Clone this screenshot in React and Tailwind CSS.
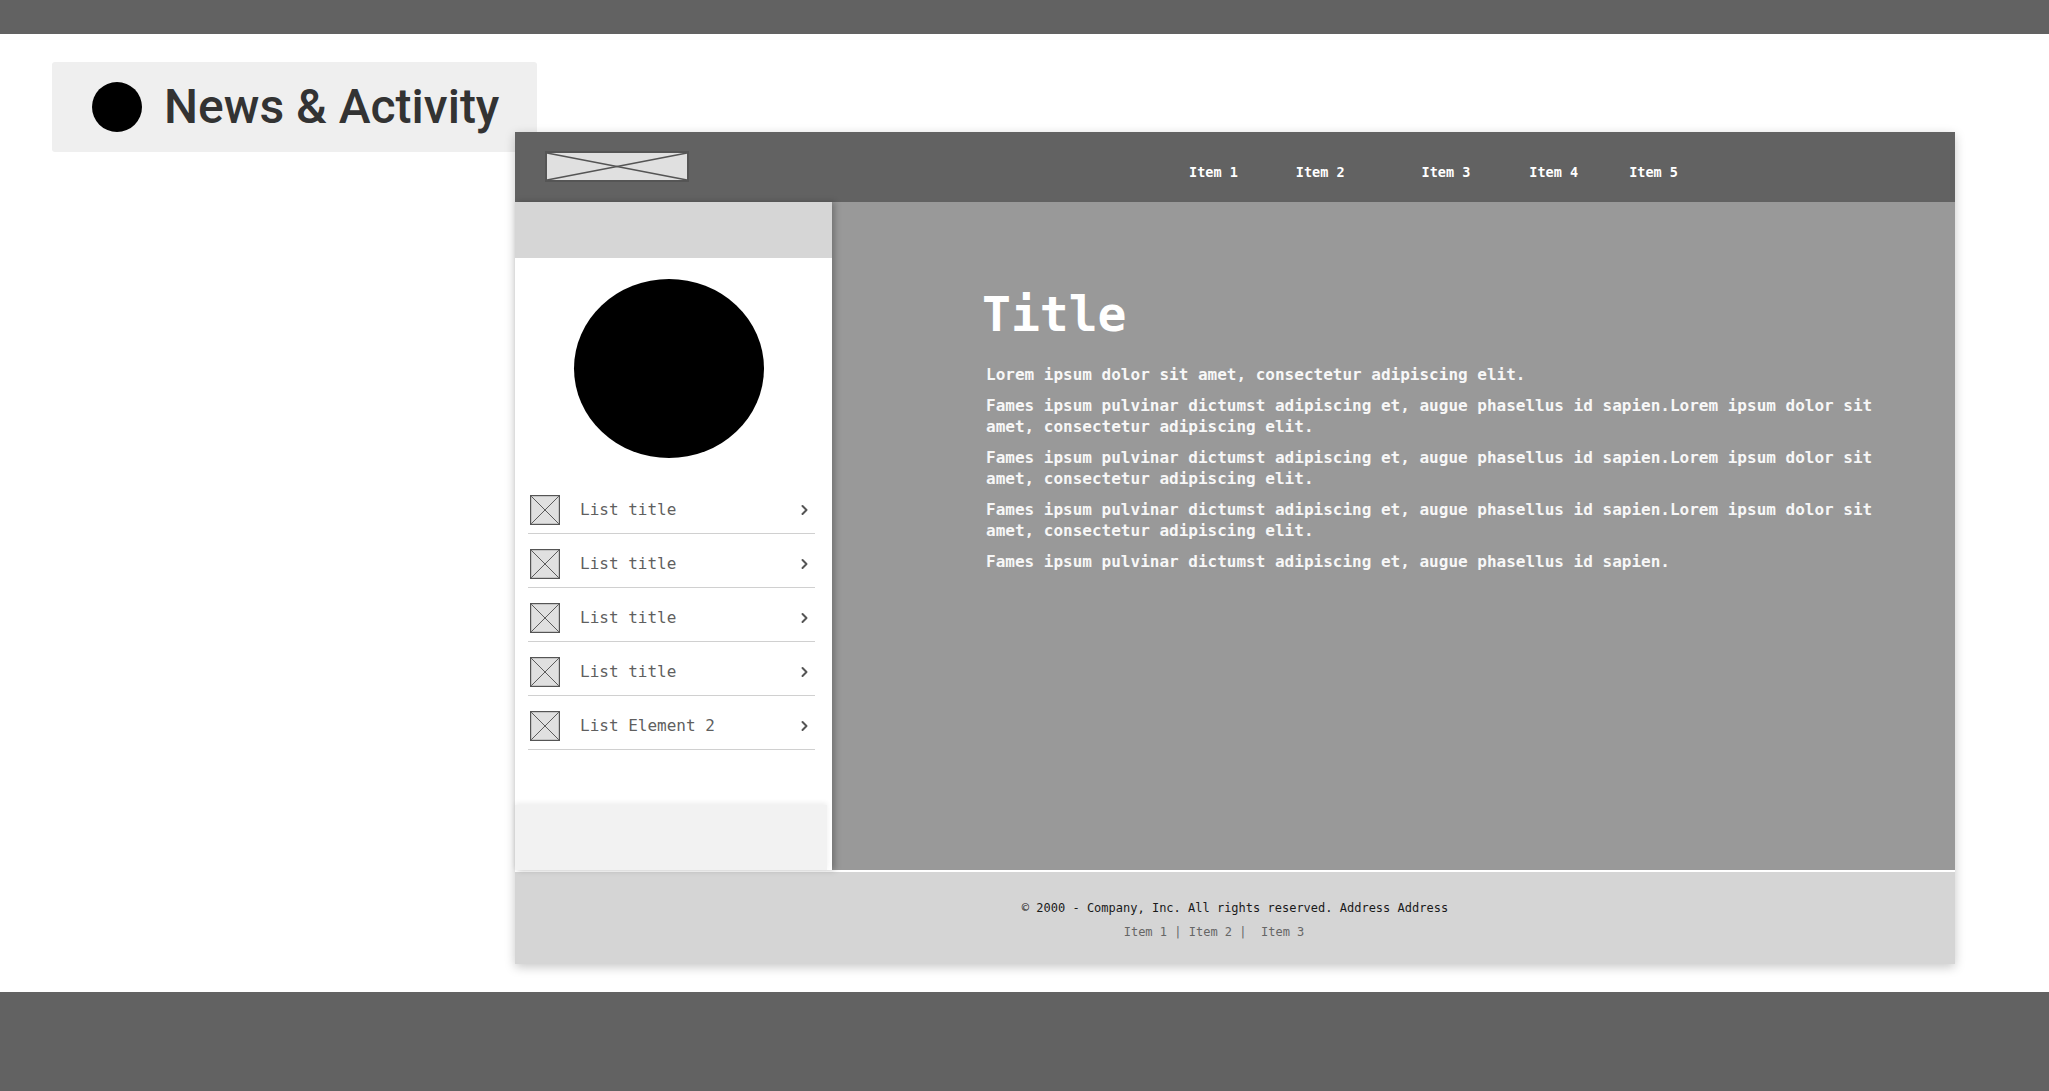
import React from "react";

const mono = { fontFamily: '"DejaVu Sans Mono", "Liberation Mono", monospace' };

function XBox({ w, h, stroke = "#555", sw = 1.2 }) {
  return (
    <svg width={w} height={h} viewBox={`0 0 ${w} ${h}`} className="block shrink-0">
      <rect x={sw / 2} y={sw / 2} width={w - sw} height={h - sw} fill="#e0e0e0" stroke={stroke} strokeWidth={sw} />
      <line x1={sw} y1={sw} x2={w - sw} y2={h - sw} stroke={stroke} strokeWidth={sw * 0.8} />
      <line x1={w - sw} y1={sw} x2={sw} y2={h - sw} stroke={stroke} strokeWidth={sw * 0.8} />
    </svg>
  );
}

function Chevron() {
  return (
    <svg width="9" height="12" viewBox="0 0 9 12" className="block">
      <path d="M2.5 2 L6.5 6 L2.5 10" fill="none" stroke="#555" strokeWidth="2" strokeLinecap="round" strokeLinejoin="round" />
    </svg>
  );
}

const listItems = ["List title", "List title", "List title", "List title", "List Element 2"];

export default function App() {
  return (
    <div className="w-[2049px] h-[1091px] flex flex-col bg-white overflow-hidden">
      <div className="h-[34px] bg-[#626262] shrink-0" />
      <div className="h-[958px] shrink-0 flex items-start">
        {/* Header card */}
        <div className="ml-[52px] mt-[28px] w-[485px] h-[90px] bg-[#efefef] rounded-[3px] flex items-center pl-[40px] shrink-0">
          <div className="w-[50px] h-[50px] rounded-full bg-black shrink-0" />
          <span
            className="ml-[22px] text-[48px] leading-none font-medium text-[#333333] whitespace-nowrap"
            style={{ fontFamily: 'Roboto, "Noto Sans", sans-serif' }}
          >
            News &amp; Activity
          </span>
        </div>

        {/* Frame */}
        <div className="relative z-10 ml-[-22px] mt-[98px] w-[1440px] h-[832px] shrink-0 flex flex-col bg-white shadow-[0_3px_10px_rgba(0,0,0,0.22)]">
          {/* Top nav */}
          <div className="h-[70px] bg-[#626262] flex items-start shrink-0">
            <div className="ml-[30px] mt-[19px]">
              <XBox w={144} h={31} stroke="#555" sw={2} />
            </div>
            <div className="flex items-center h-full pt-[10px] ml-[500px] text-white font-bold text-[13.5px]" style={mono}>
              <span>Item 1</span>
              <span className="ml-[58px]">Item 2</span>
              <span className="ml-[77px]">Item 3</span>
              <span className="ml-[59px]">Item 4</span>
              <span className="ml-[51px]">Item 5</span>
            </div>
          </div>

          {/* Body */}
          <div className="h-[668px] flex shrink-0">
            {/* Sidebar */}
            <div className="relative z-10 w-[317px] h-full bg-white flex flex-col shadow-[3px_0_6px_rgba(0,0,0,0.25)]">
              <div className="h-[56px] bg-[#d6d6d6] shrink-0" />
              <div className="mt-[21px] ml-[59px] w-[190px] h-[179px] rounded-[50%] bg-black shrink-0" />
              <div className="mt-[22px] ml-[13px] w-[287px] flex flex-col">
                {listItems.map((t, i) => (
                  <div key={i} className="h-[54px] flex items-center border-b border-[#d0d0d0] pt-[6px] pl-[2px] pr-[6px]">
                    <XBox w={30} h={30} stroke="#555" sw={1.2} />
                    <span className="ml-[20px] text-[16px] text-[#5f5f5f] flex-1" style={mono}>
                      {t}
                    </span>
                    <Chevron />
                  </div>
                ))}
              </div>
              <div className="flex-1" />
              <div className="h-[65px] w-[312px] bg-[#f2f2f2] shadow-[0_-2px_5px_rgba(0,0,0,0.07)] shrink-0" />
            </div>

            {/* Main content */}
            <div className="flex-1 h-full bg-[#999999] pl-[150px] pt-[88px]">
              <h1 className="text-[48px] leading-[48px] font-bold text-white" style={mono}>
                Title
              </h1>
              <div className="mt-[26px] ml-[4px] w-[920px] text-[16px] leading-[21px] font-bold text-[#f7f7f7] flex flex-col gap-[10px]" style={mono}>
                <p>Lorem ipsum dolor sit amet, consectetur adipiscing elit.</p>
                <p>Fames ipsum pulvinar dictumst adipiscing et, augue phasellus id sapien.Lorem ipsum dolor sit amet, consectetur adipiscing elit.</p>
                <p>Fames ipsum pulvinar dictumst adipiscing et, augue phasellus id sapien.Lorem ipsum dolor sit amet, consectetur adipiscing elit.</p>
                <p>Fames ipsum pulvinar dictumst adipiscing et, augue phasellus id sapien.Lorem ipsum dolor sit amet, consectetur adipiscing elit.</p>
                <p>Fames ipsum pulvinar dictumst adipiscing et, augue phasellus id sapien.</p>
              </div>
            </div>
          </div>

          <div className="h-[2px] bg-white shrink-0" />

          {/* Footer */}
          <div className="h-[92px] bg-[#d5d5d5] flex flex-col items-center pt-[28px] shrink-0 text-[12px] leading-[16px]" style={mono}>
            <p className="text-[#1a1a1a] whitespace-pre">© 2000 - Company, Inc. All rights reserved. Address Address</p>
            <p className="mt-[8px] pr-[42px] text-[#666666] whitespace-pre">Item 1 | Item 2 |  Item 3</p>
          </div>
        </div>
      </div>
      <div className="flex-1 bg-[#626262]" />
    </div>
  );
}
